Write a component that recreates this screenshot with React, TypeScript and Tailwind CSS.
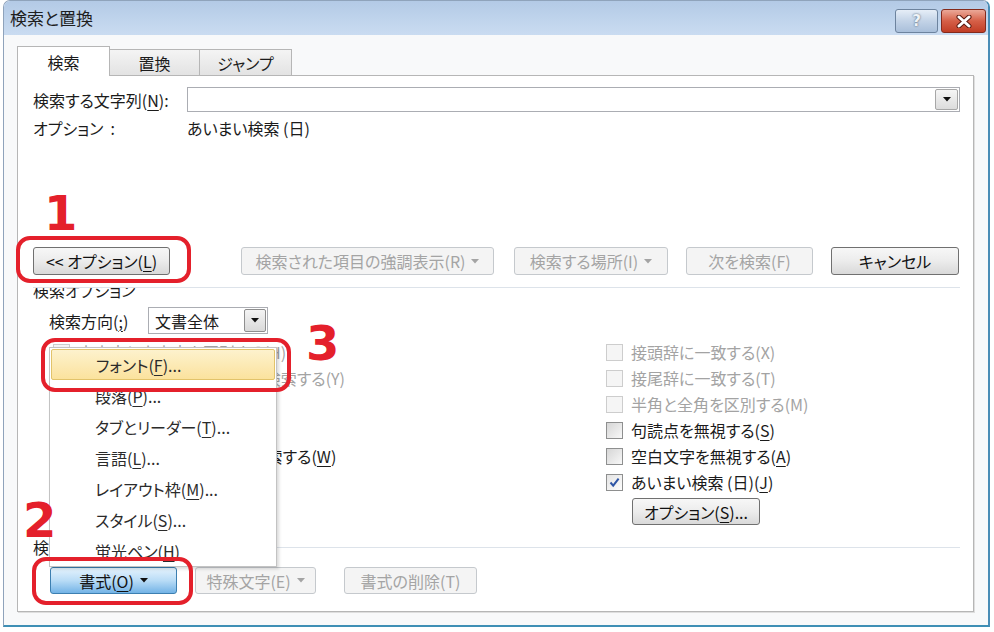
import React from 'react';

const red = 'absolute border-[4px] border-[#e4202b] rounded-[14px]';
const num = "absolute font-['DejaVu_Sans',sans-serif] font-bold text-[48px] leading-[48px] text-[#e4202b]";

function U({ children }: { children: React.ReactNode }) {
  return <span className="underline underline-offset-[3px] decoration-1">{children}</span>;
}

function Tri({ className = 'fill-[#5a5a5a]' }: { className?: string }) {
  return (
    <svg width="8" height="5" viewBox="0 0 8 5" className={className}>
      <path d="M0 0H8L4 4.6Z" />
    </svg>
  );
}

type BtnProps = {
  w: string;
  kind?: 'normal' | 'disabled' | 'hot';
  arrow?: boolean;
  children: React.ReactNode;
  className?: string;
};

function Btn({ w, kind = 'normal', arrow = false, children, className = '' }: BtnProps) {
  const look =
    kind === 'disabled'
      ? 'border-[#c5c9cd] bg-[#f4f4f4] text-[#a4a4a4]'
      : kind === 'hot'
        ? 'border-[#3c7fb1] bg-gradient-to-b from-[#e5f3fd] via-[#b9dcf6] to-[#72b3e6] text-[#111]'
        : 'border-[#707070] bg-gradient-to-b from-[#f7f7f7] via-[#ececec] to-[#d9d9d9] text-[#111]';
  return (
    <div className={`${w} h-full flex items-center justify-center gap-[6px] rounded-[3px] border ${look} ${className}`}>
      <span className="whitespace-nowrap">{children}</span>
      {arrow && <Tri className={kind === 'disabled' ? 'fill-[#a4a4a4]' : 'fill-[#111]'} />}
    </div>
  );
}

function Check({ label, state }: { label: React.ReactNode; state: 'off' | 'on' | 'disabled' }) {
  const box =
    state === 'disabled'
      ? 'border-[#cdcdcd] bg-[#f5f5f5]'
      : state === 'on'
        ? 'border-[#8e8f8f] bg-gradient-to-br from-[#e4e4e4] to-[#fdfdfd]'
        : 'border-[#8e8f8f] bg-gradient-to-br from-[#d6d6d6] to-[#f8f8f8]';
  return (
    <div className="h-[26px] flex items-center gap-[8px]">
      <div className={`w-[17px] h-[17px] shrink-0 border flex items-center justify-center ${box}`}>
        {state === 'on' && (
          <svg width="11" height="11" viewBox="0 0 11 11">
            <path d="M1.5 5.5L4.2 8.6L9.6 1.6" fill="none" stroke="#2f56a6" strokeWidth="2" />
          </svg>
        )}
      </div>
      <span className={`whitespace-nowrap ${state === 'disabled' ? 'text-[#a3a3a3]' : 'text-[#1b1b1b]'}`}>{label}</span>
    </div>
  );
}

const menuItems: React.ReactNode[] = [
  <>フォント(<U>F</U>)...</>,
  <>段落(<U>P</U>)...</>,
  <>タブとリーダー(<U>T</U>)...</>,
  <>言語(<U>L</U>)...</>,
  <>レイアウト枠(<U>M</U>)...</>,
  <>スタイル(<U>S</U>)...</>,
  <>蛍光ペン(<U>H</U>)</>,
];

export default function App() {
  return (
    <div className="relative w-[994px] h-[632px] bg-white overflow-hidden font-['Noto_Sans_CJK_JP',sans-serif] [font-feature-settings:'palt'] text-[16px] leading-[20px] text-[#1b1b1b]">
      {/* window */}
      <div className="ml-[3px] w-[987px] h-[627px] flex flex-col rounded-t-[7px] border border-[#8fa3bb] border-r-[2px] border-b-[2px] border-r-[#4a8db6] border-b-[#3f8fb5] overflow-hidden">
        {/* title bar */}
        <div className="h-[34px] shrink-0 flex items-start justify-between pl-[6px] pr-[2px] pt-[8px] bg-gradient-to-b from-[#b3cae6] to-[#cadcf1]">
          <div className="text-[17px] leading-[22px] -mt-[2px] text-[#1e1e1e]">検索と置換</div>
          <div className="flex gap-[3px]">
            <div className="w-[43px] h-[24px] rounded-[3px] border border-[#6d839e] bg-gradient-to-b from-[#e6eef7] via-[#c3d3e7] to-[#a9bfda] flex items-center justify-center">
              <span className="font-['DejaVu_Sans',sans-serif] font-bold text-[15px] leading-none text-[#eef3f8] [text-shadow:0_0_2px_#3b4a5c]">?</span>
            </div>
            <div className="w-[45px] h-[24px] rounded-[3px] border border-[#842a1c] bg-gradient-to-b from-[#eaa898] via-[#d55f47] to-[#c13d25] flex items-center justify-center">
              <svg width="16" height="13" viewBox="0 0 16 13">
                <path d="M3 2L13 11M13 2L3 11" stroke="#5a1a10" strokeWidth="5" strokeLinecap="round" />
                <path d="M3 2L13 11M13 2L3 11" stroke="#ffffff" strokeWidth="3" strokeLinecap="round" />
              </svg>
            </div>
          </div>
        </div>

        {/* client */}
        <div className="flex-1 flex flex-col bg-[#f8f9fa] pt-[11px] pl-[13px] pr-[14px] pb-[13px]">
          {/* tabs */}
          <div className="h-[29px] shrink-0 flex items-end">
            <div className="relative z-10 w-[93px] h-[30px] -mb-px bg-white border-x border-t border-[#b6b6b6] flex items-center justify-center">検索</div>
            <div className="w-[90px] h-[26px] border-t border-r border-[#b6b6b6] bg-gradient-to-b from-[#f4f4f4] to-[#e3e3e3] flex items-center justify-center">置換</div>
            <div className="w-[92px] h-[26px] border-t border-r border-[#b6b6b6] bg-gradient-to-b from-[#f4f4f4] to-[#e3e3e3] flex items-center justify-center">ジャンプ</div>
          </div>

          {/* panel */}
          <div className="flex-1 flex flex-col bg-white border border-[#b6b6b6] shadow-[1px_1px_0_#dedede] pl-[15px] pr-[13px] pt-[11px]">
            <div className="h-[25px] flex items-center">
              <div className="w-[154px] whitespace-nowrap">検索する文字列(<U>N</U>):</div>
              <div className="flex-1 h-full flex justify-end items-stretch border border-[#abadb3] bg-white p-px">
                <div className="w-[23px] rounded-[2px] border border-[#a7a7a7] bg-gradient-to-b from-[#f6f6f6] to-[#dcdcdc] flex items-center justify-center">
                  <Tri className="fill-[#111]" />
                </div>
              </div>
            </div>
            <div className="mt-[6px] h-[20px] flex items-center">
              <div className="w-[154px]">オプション&nbsp;&nbsp;:</div>
              <div>あいまい検索 (日)</div>
            </div>

            <div className="h-[109px] shrink-0" />

            <div className="h-[28px] flex">
              <Btn w="w-[137px]">&lt;&lt; オプション(<U>L</U>)</Btn>
              <Btn w="w-[253px]" kind="disabled" arrow className="ml-[71px]">
                検索された項目の強調表示(R)
              </Btn>
              <Btn w="w-[154px]" kind="disabled" arrow className="ml-[20px]">
                検索する場所(I)
              </Btn>
              <Btn w="w-[127px]" kind="disabled" className="ml-[18px]">
                次を検索(F)
              </Btn>
              <Btn w="w-[128px]" className="ml-[18px]">
                キャンセル
              </Btn>
            </div>

            <div className="mt-[12px] h-px bg-[#dde3ea]" />
            <div className="h-[11px] overflow-hidden">
              <div className="-mt-[8px] leading-[20px]">検索オプション</div>
            </div>

            <div className="mt-[8px] h-[27px] flex items-center pl-[16px]">
              <div className="w-[99px] whitespace-nowrap">
                検索方向(<U>;</U>)
              </div>
              <div className="w-[120px] h-full flex items-stretch border border-[#abadb3] bg-white p-px">
                <div className="flex-1 flex items-center pl-[5px]">文書全体</div>
                <div className="w-[22px] rounded-[2px] border border-[#8e8e8e] bg-gradient-to-b from-[#f4f4f4] to-[#d9d9d9] flex items-center justify-center">
                  <Tri className="fill-[#111]" />
                </div>
              </div>
            </div>

            <div className="mt-[5px] flex">
              <div className="w-[573px] pl-[20px] flex flex-col">
                <Check state="disabled" label="大文字と小文字を区別する(H)" />
                <Check state="disabled" label="完全に一致する単語だけを検索する(Y)" />
                <Check state="disabled" label="ワイルドカードを使用する(U)" />
                <Check state="disabled" label="あいまい検索 (英)(K)" />
                <Check state="off" label={<>英単語の異なる活用形も検索する(<U>W</U>)</>} />
              </div>
              <div className="flex flex-col">
                <Check state="disabled" label="接頭辞に一致する(X)" />
                <Check state="disabled" label="接尾辞に一致する(T)" />
                <Check state="disabled" label="半角と全角を区別する(M)" />
                <Check state="off" label={<>句読点を無視する(<U>S</U>)</>} />
                <Check state="off" label={<>空白文字を無視する(<U>A</U>)</>} />
                <Check state="on" label={<>あいまい検索 (日)(<U>J</U>)</>} />
                <div className="mt-[3px] h-[27px] ml-[26px]">
                  <Btn w="w-[128px]">
                    オプション(<U>S</U>)...
                  </Btn>
                </div>
              </div>
            </div>

            <div className="mt-[15px] h-[15px] flex items-center">
              <div className="leading-[15px]">検索</div>
              <div className="flex-1 h-px bg-[#dde3ea] ml-[4px]" />
            </div>

            <div className="mt-[12px] h-[27px] flex">
              <Btn w="w-[127px]" kind="hot" arrow className="ml-[17px]">
                書式(<U>O</U>)
              </Btn>
              <Btn w="w-[121px]" kind="disabled" arrow className="ml-[18px]">
                特殊文字(E)
              </Btn>
              <Btn w="w-[133px]" kind="disabled" className="ml-[28px]">
                書式の削除(T)
              </Btn>
            </div>
          </div>
        </div>
      </div>

      {/* 書式 dropdown menu */}
      <div className="absolute left-[49px] top-[347px] w-[228px] h-[220px] bg-white border border-[#c3c3c3] shadow-[2px_2px_3px_rgba(0,0,0,0.15)] pt-px px-px text-[#2b2b2b]">
        {menuItems.map((item, i) => (
          <div
            key={i}
            className={`h-[31px] flex items-center pl-[44px] whitespace-nowrap rounded-[2px] ${i === 0 ? 'border border-[#e2c36a] bg-gradient-to-b from-[#fdf2cd] to-[#fbe29d]' : ''}`}
          >
            {item}
          </div>
        ))}
      </div>

      {/* annotations */}
      <div className={`${red} left-[16px] top-[236px] w-[175px] h-[47px]`} />
      <div className={`${red} left-[41px] top-[338px] w-[250px] h-[54px]`} />
      <div className={`${red} left-[32px] top-[557px] w-[161px] h-[48px]`} />
      <div className={`${num} left-[44px] top-[189px]`}>1</div>
      <div className={`${num} left-[306px] top-[319px]`}>3</div>
      <div className={`${num} left-[23px] top-[496px]`}>2</div>
    </div>
  );
}
